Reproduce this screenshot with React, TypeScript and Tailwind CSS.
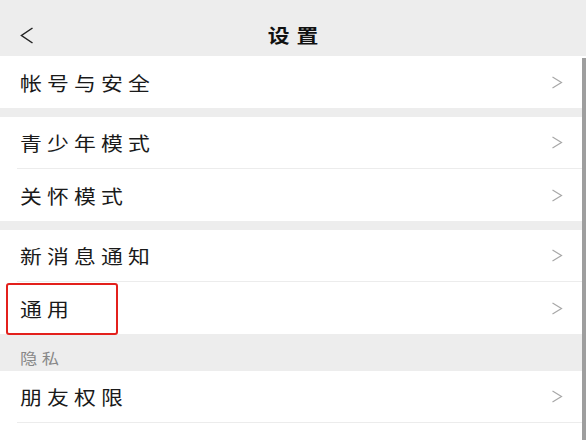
import React from 'react';

const ChevronRight = () => (
  <svg width="12" height="13" viewBox="0 0 12 13" fill="none" className="shrink-0">
    <polyline points="1.5,1 10.5,6.5 1.5,12" stroke="#a8a8a8" strokeWidth="1.2" strokeLinejoin="miter" />
  </svg>
);

interface RowProps {
  label: string;
  divider?: boolean;
  highlight?: boolean;
}

const Row: React.FC<RowProps> = ({ label, divider, highlight }) => (
  <div className="relative bg-white pl-[17px]">
    <div
      className={`flex h-[52px] items-center justify-between pl-[3px] pr-[23px] ${
        divider ? 'border-b border-[#ececec]' : ''
      }`}
    >
      <span className="origin-left scale-x-[1.15] text-[19px] leading-none tracking-[4.5px] text-[#1a1a1a]">
        {label}
      </span>
      <ChevronRight />
    </div>
    {/* annotation box drawn over the row */}
    {highlight && (
      <div className="absolute left-[6px] top-[1px] h-[52px] w-[112px] rounded-[3px] border-2 border-[#e3201c]" />
    )}
  </div>
);

export default function App() {
  return (
    <div
      className="relative h-[440px] w-[586px] overflow-hidden bg-[#ededed]"
      style={{ fontFamily: '"Noto Sans CJK SC", "Noto Sans", sans-serif' }}
    >
      {/* Header */}
      <div className="relative flex h-[56px] items-center justify-center">
        <svg width="14" height="17" viewBox="0 0 14 17" fill="none" className="absolute left-[20px] top-[27px]">
          <polyline points="12.5,1 1.5,8.5 12.5,16" stroke="#222" strokeWidth="1.5" />
        </svg>
        <span className="scale-x-[1.15] pl-[6px] pt-[12px] text-[19px] font-bold leading-none tracking-[6px] text-[#111]">
          设置
        </span>
      </div>

      <Row label="帐号与安全" />
      <div className="h-[9px]" />
      <Row label="青少年模式" divider />
      <Row label="关怀模式" />
      <div className="h-[9px]" />
      <Row label="新消息通知" divider />
      <Row label="通用" highlight />

      <div className="flex h-[37px] items-end pb-[6px] pl-5">
        <span className="origin-left scale-x-[1.15] text-[15px] leading-none tracking-[4px] text-[#888]">隐私</span>
      </div>

      <Row label="朋友权限" divider />
      <div className="h-[40px] bg-white" />

      {/* scrollbar thumb */}
      <div className="absolute bottom-0 right-0 top-[58px] w-[4px] bg-[#9e9e9e]" />
    </div>
  );
}
